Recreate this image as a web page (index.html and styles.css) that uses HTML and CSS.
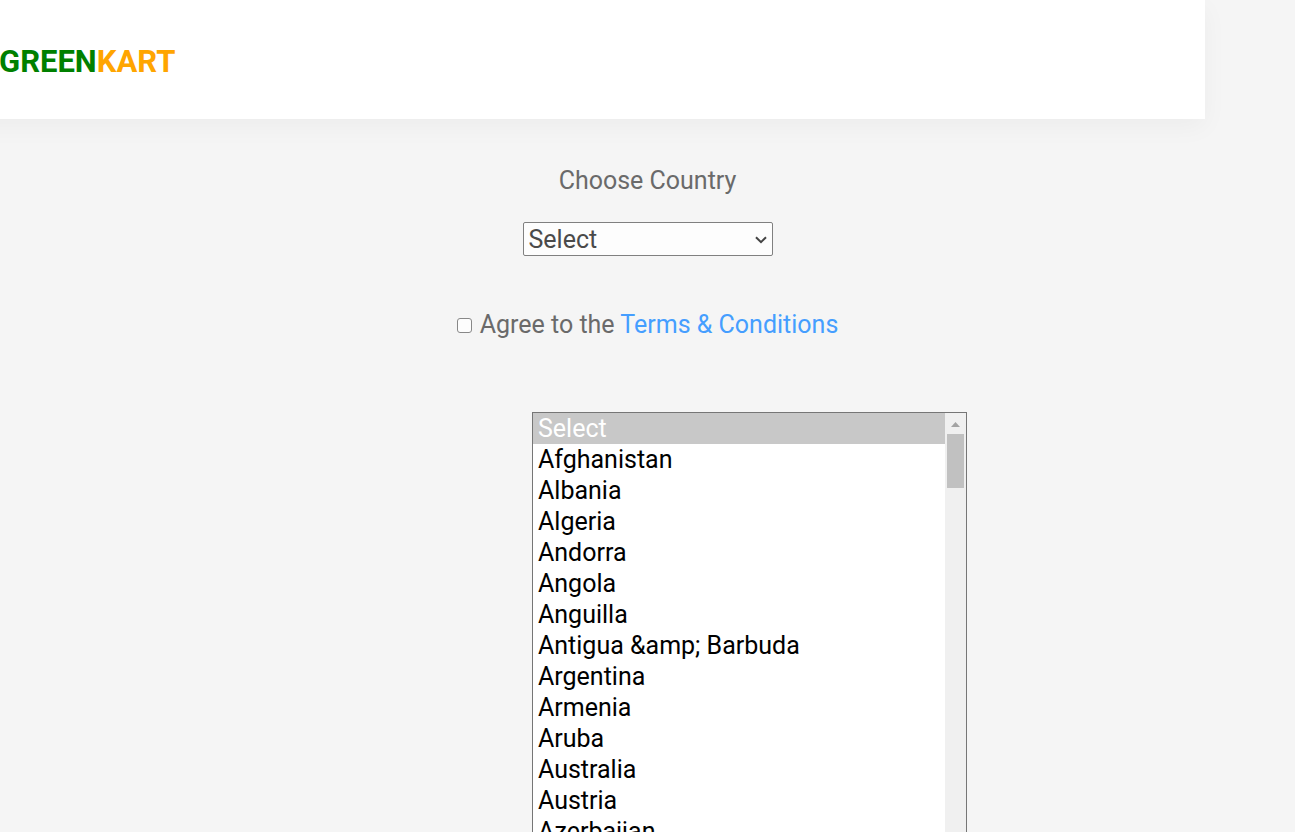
FILE: index.html
```html
<!DOCTYPE html>
<html lang="en">
<head>
<meta charset="utf-8">
<title>GreenKart</title>
<link rel="stylesheet" href="styles.css">
</head>
<body>
<header class="header">
  <div class="brand">GREEN<span class="brand-accent">KART</span></div>
</header>
<main class="checkout">
  <label class="country-label" for="country">Choose Country</label>
  <div class="country-field">
    <select class="country-select" id="country">
      <option>Select</option>
      <option>Afghanistan</option>
      <option>Albania</option>
    </select>
    <svg class="chevron" viewBox="0 0 12 8" aria-hidden="true"><path d="M1 1.2 6 6.2 11 1.2"/></svg>
  </div>
  <div class="terms">
    <input class="terms-box" type="checkbox" id="agree">
    <span><label for="agree">Agree to the</label> <a class="terms-link" href="#terms">Terms &amp; Conditions</a></span>
  </div>
  <div class="list-row">
    <div class="list">
      <select class="list-box" size="20" aria-label="Country list">
        <option class="list-option list-current">Select</option>
        <option class="list-option">Afghanistan</option>
        <option class="list-option">Albania</option>
        <option class="list-option">Algeria</option>
        <option class="list-option">Andorra</option>
        <option class="list-option">Angola</option>
        <option class="list-option">Anguilla</option>
        <option class="list-option">Antigua &amp;amp; Barbuda</option>
        <option class="list-option">Argentina</option>
        <option class="list-option">Armenia</option>
        <option class="list-option">Aruba</option>
        <option class="list-option">Australia</option>
        <option class="list-option">Austria</option>
        <option class="list-option">Azerbaijan</option>
      </select>
      <div class="scrollbar" aria-hidden="true">
        <svg class="scroll-arrow" viewBox="0 0 9 5"><path d="M0 5 4.5 0 9 5z"/></svg>
        <div class="scroll-thumb"></div>
      </div>
    </div>
  </div>
</main>
</body>
</html>
```
FILE: styles.css
```css
* { box-sizing: border-box; }

body {
  margin: 0;
  height: 100vh;
  overflow: hidden;
  background: #f5f5f5;
  color: #6a6a6a;
  font: 25px/30px Roboto, "Liberation Sans", sans-serif;
}

.header {
  display: flex;
  align-items: center;
  height: 119px;
  margin: 0 90px 0 -40px;
  padding: 4px 0 0 39px;
  background: #fff;
  box-shadow: 0 8px 24px rgba(0, 0, 0, 0.04);
}

.brand {
  color: #008000;
  font-size: 31px;
  font-weight: 700;
}

.brand-accent { color: #ffa500; }

.checkout {
  display: flex;
  flex-direction: column;
  align-items: center;
  padding-top: 47px;
}

.country-field {
  position: relative;
  width: 250px;
  margin-top: 26px;
}

.country-select {
  display: block;
  width: 100%;
  height: 34px;
  padding: 2px 24px 0 5px;
  appearance: none;
  border: 1px solid #808080;
  border-radius: 2px;
  background: #fdfdfd;
  color: #4a4a4a;
  font: inherit;
}

.chevron {
  position: absolute;
  top: 14px;
  right: 6px;
  width: 12px;
  height: 8px;
  fill: none;
  stroke: #444;
  stroke-width: 2;
  pointer-events: none;
}

.terms {
  display: flex;
  align-items: center;
  gap: 8px;
  margin-top: 54px;
}

.terms-box {
  width: 15px;
  height: 15px;
  margin: 0;
  appearance: none;
  border: 1px solid #888;
  border-radius: 3px;
  background: #fdfdfd;
}

.terms-link {
  color: #459eff;
  text-decoration: none;
}

.list-row {
  display: flex;
  justify-content: center;
  margin-top: 72px;
  padding-left: 204px;
}

.list {
  display: flex;
  width: 435px;
  border: 1px solid #767676;
  background: #fff;
}

.list-box {
  flex: 1;
  height: 620px;
  padding: 0;
  border: 0;
  border-radius: 0;
  outline: 0;
  background: #fff;
  color: #000;
  font: inherit;
  scrollbar-width: none;
}

.list-option {
  min-height: 31px;
  padding: 1px 5px 0;
  line-height: 30px;
}

.list-current {
  background: #c8c8c8;
  color: #fff;
}

.scrollbar {
  display: flex;
  flex-direction: column;
  align-items: center;
  width: 21px;
  padding-top: 9px;
  background: #f0f0f0;
}

.scroll-arrow {
  width: 9px;
  height: 5px;
  fill: #a3a3a3;
}

.scroll-thumb {
  width: 17px;
  height: 54px;
  margin-top: 7px;
  background: #c1c1c1;
}
```
